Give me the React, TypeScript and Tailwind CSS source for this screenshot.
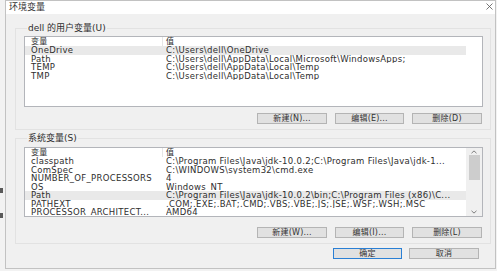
import React from "react";

type Row = { name: string; value: string; sel?: boolean };

const userVars: Row[] = [
  { name: "OneDrive", value: "C:\\Users\\dell\\OneDrive", sel: true },
  { name: "Path", value: "C:\\Users\\dell\\AppData\\Local\\Microsoft\\WindowsApps;" },
  { name: "TEMP", value: "C:\\Users\\dell\\AppData\\Local\\Temp" },
  { name: "TMP", value: "C:\\Users\\dell\\AppData\\Local\\Temp" },
];

const sysVars: Row[] = [
  { name: "classpath", value: "C:\\Program Files\\Java\\jdk-10.0.2;C:\\Program Files\\Java\\jdk-1..." },
  { name: "ComSpec", value: "C:\\WINDOWS\\system32\\cmd.exe" },
  { name: "NUMBER_OF_PROCESSORS", value: "4" },
  { name: "OS", value: "Windows_NT" },
  { name: "Path", value: "C:\\Program Files\\Java\\jdk-10.0.2\\bin;C:\\Program Files (x86)\\C...", sel: true },
  { name: "PATHEXT", value: ".COM;.EXE;.BAT;.CMD;.VBS;.VBE;.JS;.JSE;.WSF;.WSH;.MSC" },
  { name: "PROCESSOR_ARCHITECT...", value: "AMD64" },
];

function Header() {
  return (
    <div className="flex h-[9px] items-center w-[441px] bg-white">
      <div className="w-[137px] shrink-0 pl-[6px] text-[8px] leading-[8px]">变量</div>
      <div className="w-px h-full bg-[#e6e6e6] shrink-0" />
      <div className="flex-1 pl-[3px] text-[8px] leading-[8px]">值</div>
    </div>
  );
}

function DataRow({ r }: { r: Row }) {
  return (
    <div className={r.sel ? "flex h-[8.5px] items-center w-[441px] bg-[#e9e9e9]" : "flex h-[8.5px] items-center w-[441px]"}>
      <div className="w-[141px] shrink-0 pl-[6px] overflow-hidden whitespace-nowrap">{r.name}</div>
      <div className="flex-1 overflow-hidden whitespace-nowrap">{r.value}</div>
    </div>
  );
}

function Btn({ label, w, primary }: { label: string; w: string; primary?: boolean }) {
  return (
    <div
      className={
        (primary ? "border-[#2a7fd4] " : "border-[#b4b4b4] ") +
        w +
        " h-[11px] bg-[#e1e1e1] border flex items-center justify-center text-[8px] leading-[8px] tracking-[0.2px] text-[#333]"
      }
    >
      {label}
    </div>
  );
}

function Chevron({ up }: { up?: boolean }) {
  return (
    <svg width="6" height="4" viewBox="0 0 6 4">
      <path d={up ? "M0.5 3.2 L3 0.9 L5.5 3.2" : "M0.5 0.8 L3 3.1 L5.5 0.8"} fill="none" stroke="#707070" strokeWidth="0.9" />
    </svg>
  );
}

export default function App() {
  return (
    <div className="w-[497px] h-[271px] bg-[#f2f2f2] flex font-['DejaVu_Sans','Noto_Sans_CJK_SC',sans-serif] text-[#2e2e2e] overflow-hidden">
      {/* desktop strip on the left */}
      <div className="w-[5px] shrink-0 flex flex-col">
        <div className="h-[188px]" />
        <div className="w-[3px] h-[5px] bg-[#5a5a5a]" />
        <div className="h-[20px]" />
        <div className="w-[3px] h-[5px] bg-[#5a5a5a]" />
      </div>

      {/* window */}
      <div className="w-[491px] h-[269px] shrink-0 border border-[#c2c2c2] bg-[#f0f0f0] flex flex-col">
        {/* title bar */}
        <div className="h-[13px] bg-white flex items-center justify-between pl-[3px] pr-[2px] shrink-0">
          <span className="text-[9px] leading-[9px] text-[#333]">环境变量</span>
          <svg width="7" height="7" viewBox="0 0 7 7" className="mb-[3px]">
            <path d="M0.5 0.5 L6.5 6.5 M6.5 0.5 L0.5 6.5" stroke="#555" strokeWidth="0.8" />
          </svg>
        </div>

        {/* body */}
        <div className="flex flex-col pl-[9px] text-[8.5px] leading-[8.5px] tracking-[0.3px]">
          {/* user variables */}
          <fieldset className="mt-[9px] w-[476px] border border-[#e2e2e2] pl-[8px] pr-[7px] pb-[5px]">
            <legend className="ml-[3px] px-[1px] text-[9px] leading-[10px] tracking-normal">dell 的用户变量(U)</legend>
            <div className="mt-[3px] h-[71px] w-[459px] border border-[#b3b5ba] bg-white">
              <Header />
              {userVars.map((r) => (
                <DataRow key={r.name} r={r} />
              ))}
            </div>
            <div className="mt-[6px] flex justify-end gap-[8px] pr-[1px]">
              <Btn label="新建(N)..." w="w-[70px]" />
              <Btn label="编辑(E)..." w="w-[69px]" />
              <Btn label="删除(D)" w="w-[70px]" />
            </div>
          </fieldset>

          {/* system variables */}
          <fieldset className="mt-[3px] w-[476px] border border-[#e2e2e2] pl-[8px] pr-[7px] pb-[5px]">
            <legend className="ml-[3px] px-[1px] text-[9px] leading-[10px] tracking-normal">系统变量(S)</legend>
            <div className="mt-[4px] h-[70px] w-[459px] border border-[#b3b5ba] bg-white flex overflow-hidden">
              <div className="w-[441px] shrink-0">
                <Header />
                {sysVars.map((r) => (
                  <DataRow key={r.name} r={r} />
                ))}
              </div>
              <div className="flex-1 bg-[#f0f0f0] flex flex-col items-center">
                <div className="h-[7px] flex items-center justify-center">
                  <Chevron up />
                </div>
                <div className="w-[11px] h-[25px] bg-[#cdcdcd]" />
                <div className="flex-1" />
                <div className="h-[8px] flex items-center justify-center">
                  <Chevron />
                </div>
              </div>
            </div>
            <div className="mt-[10px] flex justify-end gap-[8px] pr-[1px]">
              <Btn label="新建(W)..." w="w-[70px]" />
              <Btn label="编辑(I)..." w="w-[69px]" />
              <Btn label="删除(L)" w="w-[70px]" />
            </div>
          </fieldset>
        </div>

        {/* OK / Cancel */}
        <div className="mt-[4px] flex justify-end gap-[7px] pr-[16px]">
          <Btn label="确定" w="w-[69px]" primary />
          <Btn label="取消" w="w-[70px]" />
        </div>
      </div>
    </div>
  );
}
